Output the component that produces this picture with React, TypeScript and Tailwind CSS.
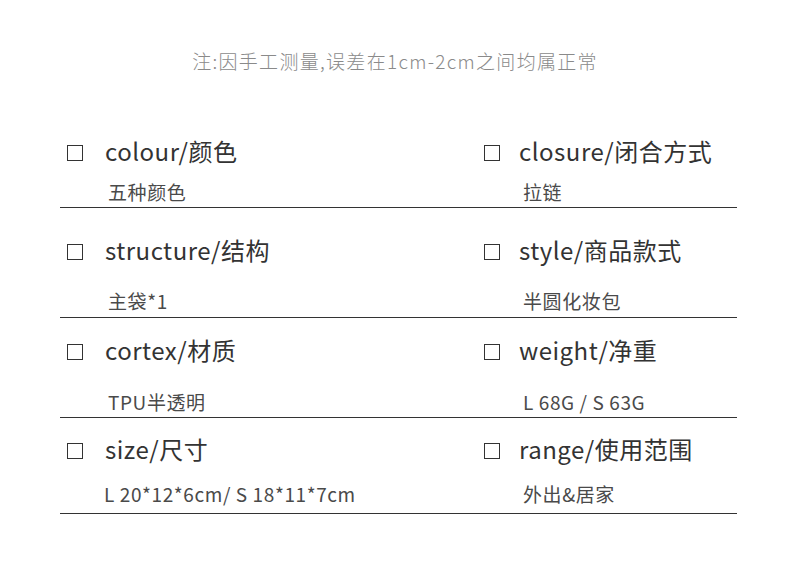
import React from "react";

type Spec = {
  title: string;
  value: string;
  valueClass?: string;
};

type Row = {
  left: Spec;
  right: Spec;
  rowClass: string;
  subClass: string;
};

const rows: Row[] = [
  {
    left: { title: "colour/颜色", value: "五种颜色" },
    right: { title: "closure/闭合方式", value: "拉链" },
    rowClass: "pt-0 pb-[3px]",
    subClass: "mt-[14px]",
  },
  {
    left: { title: "structure/结构", value: "主袋*1" },
    right: { title: "style/商品款式", value: "半圆化妆包" },
    rowClass: "pt-[27px] pb-[4px]",
    subClass: "mt-[24px]",
  },
  {
    left: { title: "cortex/材质", value: "TPU半透明" },
    right: { title: "weight/净重", value: "L 68G / S 63G" },
    rowClass: "pt-[17px] pb-[3px]",
    subClass: "mt-[25px]",
  },
  {
    left: { title: "size/尺寸", value: "L 20*12*6cm/ S 18*11*7cm", valueClass: "-ml-[4px]" },
    right: { title: "range/使用范围", value: "外出&居家" },
    rowClass: "pt-[16px] pb-[7px]",
    subClass: "mt-[18px]",
  },
];

// 一个属性单元：方框 + 标题，下面是取值
function Cell({ spec, gap, subIndent, subClass }: { spec: Spec; gap: string; subIndent: string; subClass: string }) {
  return (
    <div className="flex flex-col">
      <div className={`flex items-center pl-[7px] h-[30px] ${gap}`}>
        <span className="block w-[16px] h-[16px] border-[1.5px] border-[#333] mt-[3px] shrink-0" />
        <span className="text-[24px] leading-[30px] tracking-[0.5px] text-[#333] whitespace-nowrap">{spec.title}</span>
      </div>
      <div className={`${subClass} ${subIndent}`}>
        <span className={`block text-[19px] leading-[24px] tracking-[0.6px] text-[#4a4a4a] whitespace-nowrap ${spec.valueClass ?? ""}`}>
          {spec.value}
        </span>
      </div>
    </div>
  );
}

export default function App() {
  return (
    <div
      className="w-[790px] h-[566px] bg-white overflow-hidden"
      style={{ fontFamily: '"Noto Sans CJK SC", "Noto Sans", sans-serif' }}
    >
      <p className="pt-[49px] text-center text-[19px] leading-[24px] tracking-[1.3px] font-light text-[#8a8a8a]">
        注:因手工测量,误差在1cm-2cm之间均属正常
      </p>

      <div className="ml-[60px] w-[677px] mt-[63px]">
        {rows.map((row) => (
          <div key={row.left.title} className={`grid grid-cols-[417px_260px] border-b border-[#333] ${row.rowClass}`}>
            <Cell spec={row.left} gap="gap-[22px]" subIndent="pl-[48px]" subClass={row.subClass} />
            <Cell spec={row.right} gap="gap-[19px]" subIndent="pl-[46px]" subClass={row.subClass} />
          </div>
        ))}
      </div>
    </div>
  );
}
